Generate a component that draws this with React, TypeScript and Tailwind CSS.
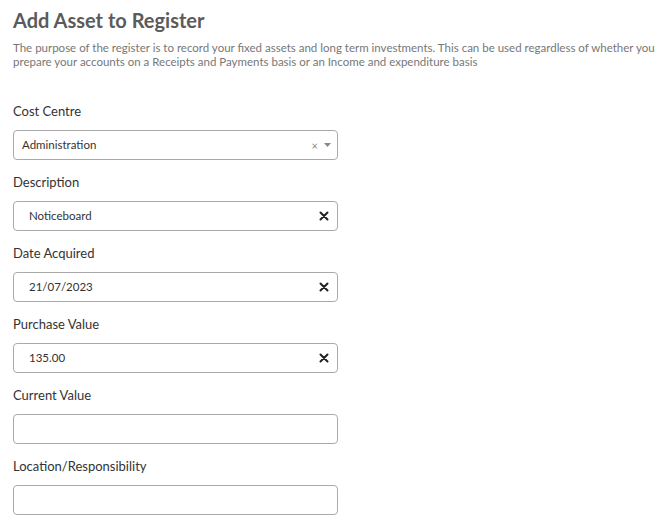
import React from 'react'

const font = { fontFamily: 'Lato, "Noto Sans", sans-serif' }

function ClearIcon() {
    return (
        <svg width="10" height="10" viewBox="0 0 10 10" className="shrink-0">
            <path d="M1.5 1.5 L8.5 8.5 M8.5 1.5 L1.5 8.5" stroke="#222" strokeWidth="2" strokeLinecap="round" />
        </svg>
    )
}

function TextField({ label, value }: { label: string; value?: string }) {
    return (
        <div className="flex flex-col">
            <label className="text-[13px] leading-[18px] text-[#333] mb-[10px]">{label}</label>
            <div className="w-[325px] h-[30px] border border-[#aaa] rounded-[4px] flex items-center pl-[15px] pr-[8px]">
                <span className="flex-1 text-[11.5px] text-[#333]">{value}</span>
                {value && <ClearIcon />}
            </div>
        </div>
    )
}

export default function App() {
    return (
        <div className="bg-white min-h-screen px-[13px] pt-[8px]" style={font}>
            <h1 className="text-[20px] leading-[24px] font-bold text-[#5b5b5b]">Add Asset to Register</h1>
            <p className="mt-[9px] text-[11.5px] leading-[14px] text-[#777]">
                The purpose of the register is to record your fixed assets and long term investments. This can be used regardless of whether you prepare your accounts on a Receipts and Payments basis or an Income and expenditure basis
            </p>
            <div className="mt-[33px] flex flex-col gap-[13px]">
                <div className="flex flex-col">
                    <label className="text-[13px] leading-[18px] text-[#333] mb-[10px]">Cost Centre</label>
                    <div className="w-[325px] h-[30px] border border-[#aaa] rounded-[4px] flex items-center pl-[8px] pr-[6px]">
                        <span className="flex-1 text-[11.5px] text-[#333]">Administration</span>
                        <span className="text-[11px] text-[#888] mr-[6px] leading-none">×</span>
                        <svg width="7" height="4" viewBox="0 0 7 4"><path d="M0 0 L7 0 L3.5 4 Z" fill="#888" /></svg>
                    </div>
                </div>
                <TextField label="Description" value="Noticeboard" />
                <TextField label="Date Acquired" value="21/07/2023" />
                <TextField label="Purchase Value" value="135.00" />
                <TextField label="Current Value" />
                <TextField label="Location/Responsibility" />
            </div>
        </div>
    )
}
